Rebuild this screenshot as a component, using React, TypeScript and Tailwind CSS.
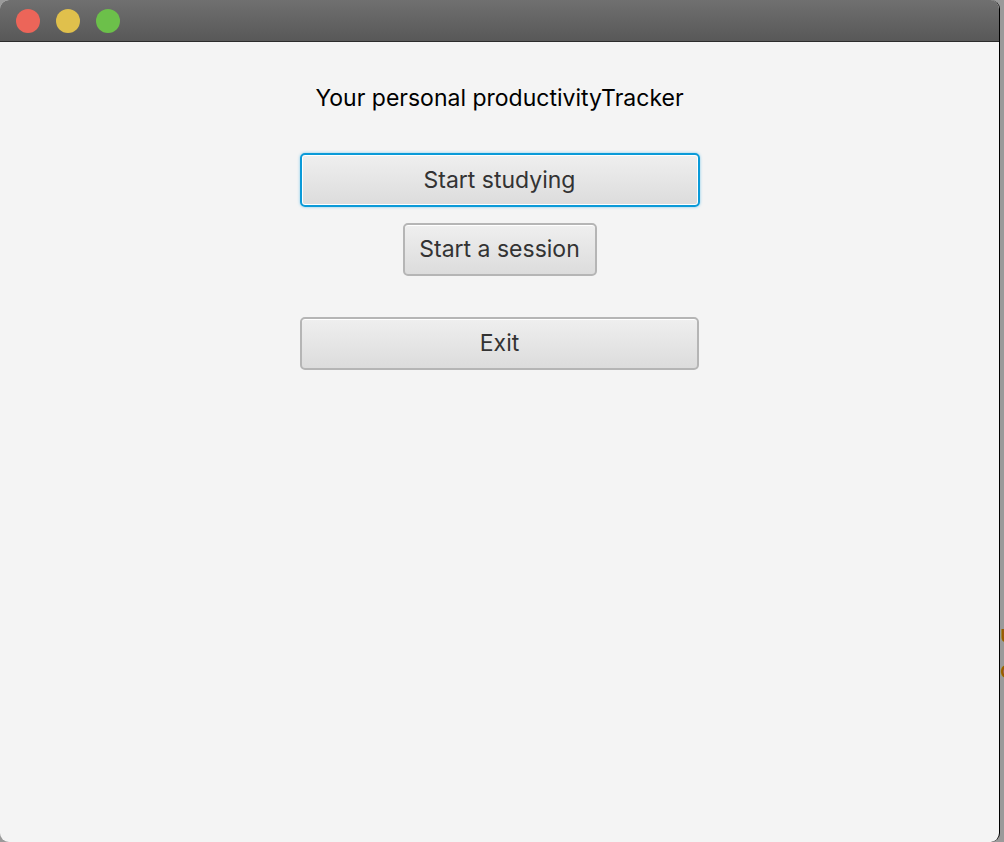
export default function App() {
  return (
    <div className="relative flex h-[842px] w-[1004px] overflow-hidden bg-[#9a9a9a]" style={{ fontFamily: "Inter, 'Liberation Sans', sans-serif" }}>
      {/* Window */}
      <div className="flex w-[1000px] flex-col overflow-hidden rounded-[9px] border-r border-black bg-[#f4f4f4]">
        {/* Title bar */}
        <div className="flex h-[42px] shrink-0 items-center gap-[16px] border-b border-[#2b2b2b] bg-gradient-to-b from-[#707070] to-[#585858] pl-[16px]">
          <span className="h-[24px] w-[24px] rounded-full bg-[#ec6559]" />
          <span className="h-[24px] w-[24px] rounded-full bg-[#e0c04c]" />
          <span className="h-[24px] w-[24px] rounded-full bg-[#6cc04a]" />
        </div>

        {/* Body */}
        <div className="flex flex-col items-center pt-[42px]">
          <p className="text-[23px] leading-[28px] text-black">Your personal productivityTracker</p>

          <button className="mt-[41px] h-[54px] w-[400px] rounded-[5px] border-2 border-[#0a9ad8] bg-gradient-to-b from-[#efefef] to-[#dcdcdc] text-[23px] text-[#333] shadow-[0_0_3px_#7cc8ec,inset_0_0_0_1px_#fff]">
            Start studying
          </button>

          <button className="mt-[16px] h-[53px] w-[194px] rounded-[5px] border-2 border-[#b5b5b5] bg-gradient-to-b from-[#efefef] to-[#dcdcdc] text-[23px] text-[#333] shadow-[inset_0_1px_0_#fff]">
            Start a session
          </button>

          <button className="mt-[41px] h-[53px] w-[399px] rounded-[5px] border-2 border-[#b5b5b5] bg-gradient-to-b from-[#efefef] to-[#dcdcdc] text-[23px] text-[#333] shadow-[inset_0_1px_0_#fff]">
            Exit
          </button>
        </div>
      </div>

      {/* Sliver of the window behind */}
      <div className="flex w-[4px] flex-col pt-[616px] text-[24px] font-medium leading-[36px] text-[#9a5a00]">
        <span>u</span>
        <span>o</span>
      </div>
    </div>
  );
}
